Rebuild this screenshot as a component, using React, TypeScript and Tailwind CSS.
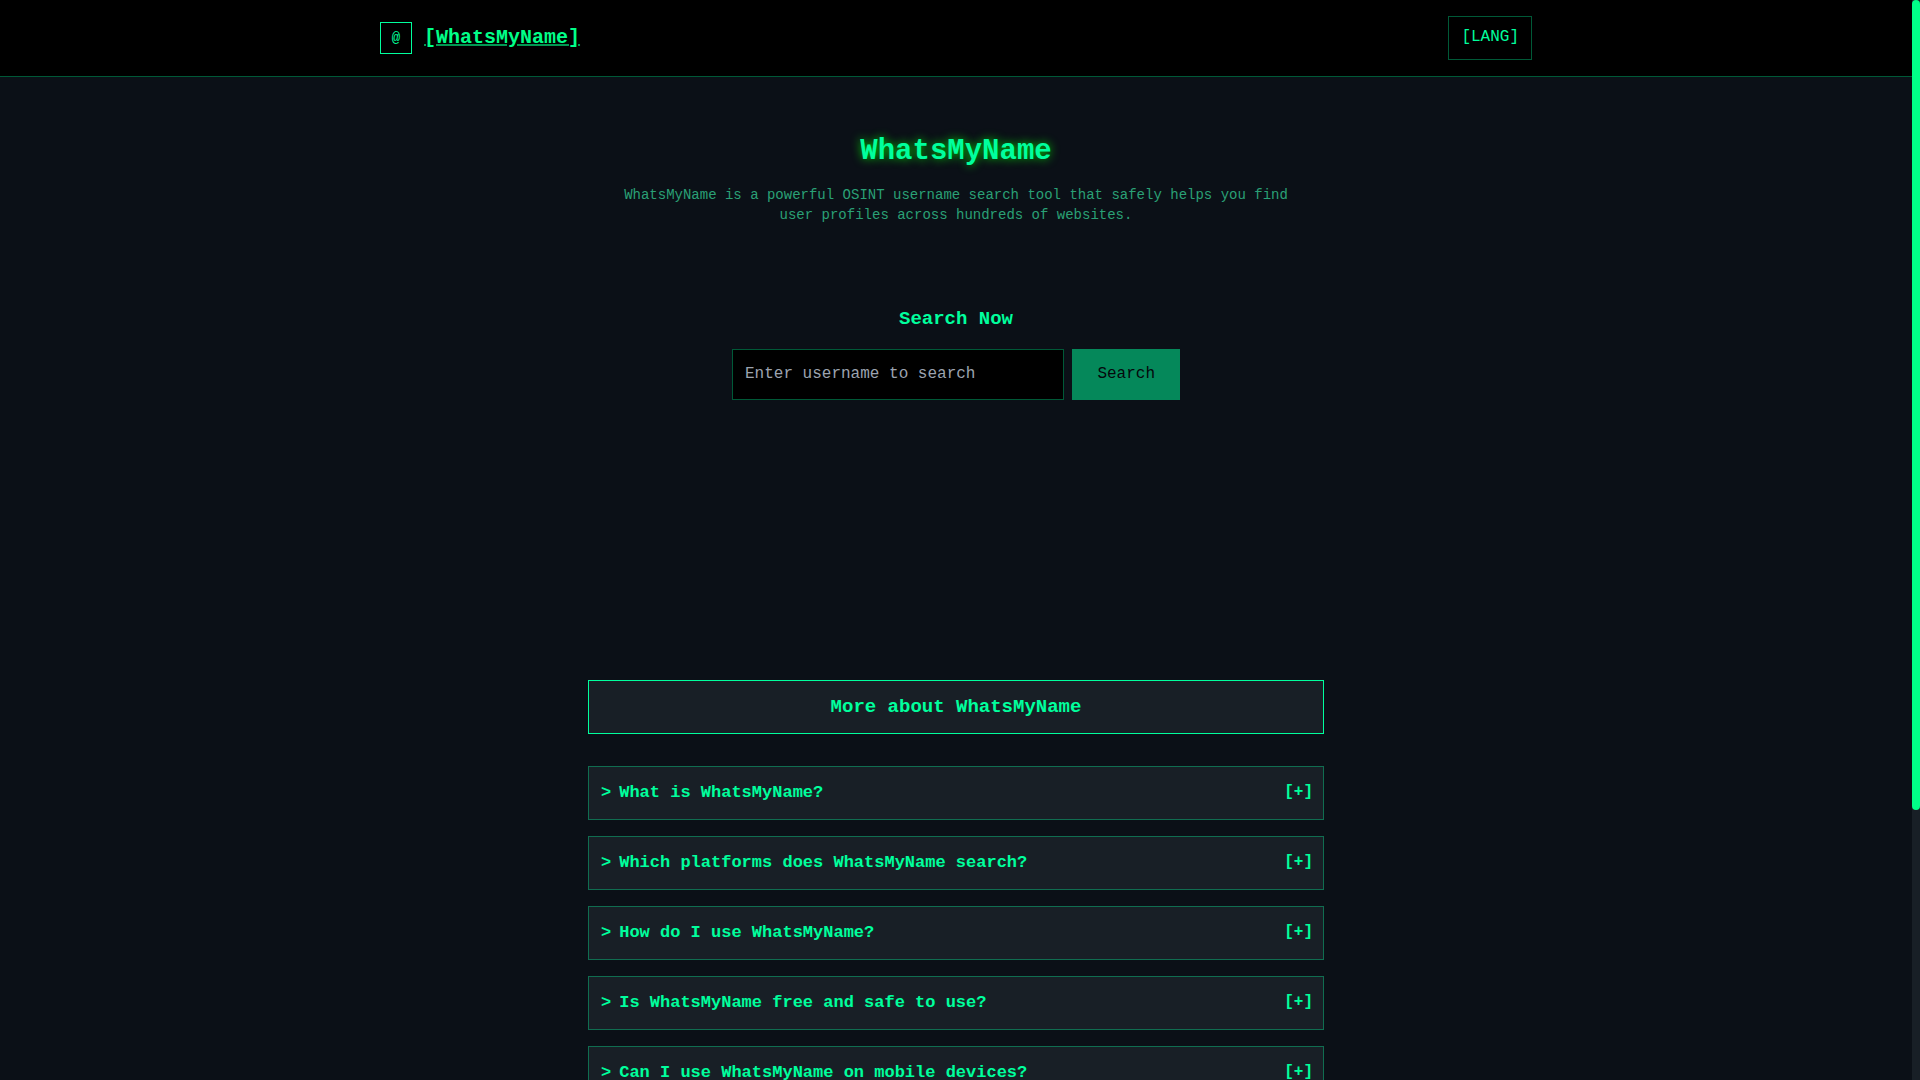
const questions = [
  'What is WhatsMyName?',
  'Which platforms does WhatsMyName search?',
  'How do I use WhatsMyName?',
  'Is WhatsMyName free and safe to use?',
  'Can I use WhatsMyName on mobile devices?',
];

function Header() {
  return (
    <header className="border-b border-[#00ff9d]/35 bg-black">
      <div className="mx-auto flex max-w-6xl items-center justify-between py-4">
        <a href="#" className="flex items-center gap-3">
          <span className="flex size-8 items-center justify-center border border-[#00ff9d] text-sm text-[#00ff9d]">
            @
          </span>
          <span className="text-xl font-bold text-[#00ff88] underline decoration-[#00ff88]/60">
            [WhatsMyName]
          </span>
        </a>
        <button type="button" className="h-11 border border-[#00ff9d]/35 px-3 pb-0.5 text-[#00ff9d]">
          [LANG]
        </button>
      </div>
    </header>
  );
}

function SearchForm() {
  return (
    <section className="mx-auto mt-20 max-w-md">
      <h2 className="text-center text-[19px] leading-7 font-bold">
        <label htmlFor="username">Search Now</label>
      </h2>
      <form className="mt-4 flex gap-2" onSubmit={(e) => e.preventDefault()}>
        <input
          id="username"
          type="text"
          placeholder="Enter username to search"
          className="h-[51px] min-w-0 flex-1 border border-[#00ff9d]/35 bg-black px-3 pb-0.5 text-base text-[#00ff9d] outline-none placeholder:text-[#9ca3af]"
        />
        <button
          type="submit"
          disabled
          className="h-[51px] border border-[#00ff9d] bg-[#00ff9d] px-6 pb-0.5 text-base text-black opacity-50"
        >
          Search
        </button>
      </form>
    </section>
  );
}

function Faq() {
  return (
    <section className="mx-auto mt-[280px] max-w-3xl px-4">
      <h2 className="border border-[#00ff9d] bg-[#181f26] py-3 text-center text-[19px] leading-7 font-bold">
        More about WhatsMyName
      </h2>
      <div className="mt-8 flex flex-col gap-4">
        {questions.map((question) => (
          <button
            key={question}
            type="button"
            className="flex w-full items-center justify-between border border-[#00ff9d]/35 bg-[#181f26] py-3 pr-2.5 pl-3 text-left font-bold"
          >
            <span className="flex gap-2 text-[17px] leading-7">
              <span>&gt;</span>
              <span>{question}</span>
            </span>
            <span className="pb-0.5 text-base">[+]</span>
          </button>
        ))}
      </div>
    </section>
  );
}

export default function App() {
  return (
    <div className="h-screen overflow-hidden bg-[#0b1017] pr-2 font-['Liberation_Mono',monospace] text-[#00ff9d]">
      <Header />
      <main>
        <section className="mx-auto mt-14 max-w-2xl text-center">
          <h1 className="text-[29px] leading-[38px] font-bold [text-shadow:0_0_10px_#00ff00cc]">WhatsMyName</h1>
          <p className="mt-3.5 text-sm text-[#2aa076]">
            WhatsMyName is a powerful OSINT username search tool that safely helps you find user profiles across
            hundreds of websites.
          </p>
        </section>
        <SearchForm />
        <Faq />
      </main>
      <div className="fixed inset-y-0 right-0 w-2 bg-[#181f26]">
        <div className="h-3/4 rounded bg-[#00ff88]" />
      </div>
    </div>
  );
}
